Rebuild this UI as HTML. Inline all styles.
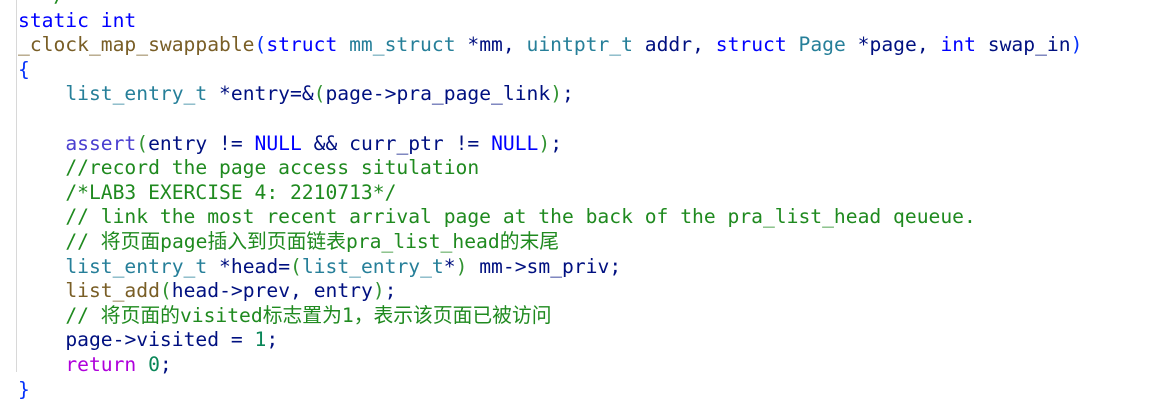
<!DOCTYPE html>
<html><head><meta charset="utf-8"><style>
html,body{margin:0;padding:0;background:#fff;width:1163px;height:407px;overflow:hidden;position:relative}
.code{position:absolute;left:18px;top:-15.9px;font-family:"DejaVu Sans Mono","Liberation Mono","Noto Sans CJK SC",monospace;font-size:19.65px;line-height:24.6px;white-space:pre;color:#001080}
.k{color:#0000ff}.t{color:#267f99}.f{color:#795e26}.v{color:#001080}.c{color:#1f8a1f}.n{color:#098658}.r{color:#af00db}.m{color:#4a3fd0}
.b1{color:#0431fa}.b2{color:#319331}.p{color:#333}
.z{font-family:"Noto Sans CJK SC",sans-serif;font-size:19.8px;line-height:0}
.g{position:absolute;left:16px;width:1px;background:#d8d8d8}
</style></head><body>
<div class="g" style="top:0;height:372px"></div>
<div class="code"><span class="c">  */</span>
<span class="k">static</span> <span class="k">int</span>
<span class="f">_clock_map_swappable</span><span class="b1">(</span><span class="k">struct</span> <span class="t">mm_struct</span> *<span class="v">mm</span>, <span class="t">uintptr_t</span> <span class="v">addr</span>, <span class="k">struct</span> <span class="t">Page</span> *<span class="v">page</span>, <span class="k">int</span> <span class="v">swap_in</span><span class="b1">)</span>
<span class="b1">{</span>
    <span class="t">list_entry_t</span> *<span class="v">entry</span>=&amp;<span class="b2">(</span><span class="v">page</span>-&gt;<span class="v">pra_page_link</span><span class="b2">)</span>;

    <span class="m">assert</span><span class="b2">(</span><span class="v">entry</span> != <span class="k">NULL</span> &amp;&amp; <span class="v">curr_ptr</span> != <span class="k">NULL</span><span class="b2">)</span>;
    <span class="c">//record the page access situlation</span>
    <span class="c">/*LAB3 EXERCISE 4: 2210713*/</span>
    <span class="c">// link the most recent arrival page at the back of the pra_list_head qeueue.</span>
    <span class="c">// <span class="z">将页面</span>page<span class="z">插入到页面链表</span>pra_list_head<span class="z">的末尾</span></span>
    <span class="t">list_entry_t</span> *<span class="v">head</span>=<span class="b2">(</span><span class="t">list_entry_t</span>*<span class="b2">)</span> <span class="v">mm</span>-&gt;<span class="v">sm_priv</span>;
    <span class="f">list_add</span><span class="b2">(</span><span class="v">head</span>-&gt;<span class="v">prev</span>, <span class="v">entry</span><span class="b2">)</span>;
    <span class="c">// <span class="z">将页面的</span>visited<span class="z">标志置为</span>1<span class="z">，表示该页面已被访问</span></span>
    <span class="v">page</span>-&gt;<span class="v">visited</span> = <span class="n">1</span>;
    <span class="r">return</span> <span class="n">0</span>;
<span class="b1">}</span></div>
</body></html>
